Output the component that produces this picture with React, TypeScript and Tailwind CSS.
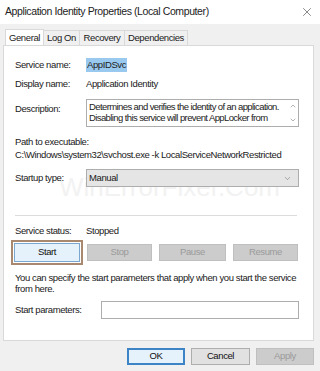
import { X, ChevronDown, ChevronUp } from 'lucide-react';

const font = { fontFamily: '"Liberation Sans", Arial, sans-serif' };

function Btn({ label, disabled, focus, blue }: { label: string; disabled?: boolean; focus?: boolean; blue?: boolean }) {
    if (disabled) {
        return (
            <div className="h-full flex items-center justify-center bg-[#cccccc] border border-[#bfbfbf] text-[#9a9a9a]">
                {label}
            </div>
        );
    }
    if (focus) {
        return (
            <div className="h-full border-2 border-[#a8896f] p-px">
                <div className="h-full flex items-center justify-center bg-[#e5f1fb] border border-[#7aa7cf] text-[#111]">{label}</div>
            </div>
        );
    }
    if (blue) {
        return (
            <div className="h-full flex items-center justify-center bg-[#e5f1fb] border-2 border-[#3d84c6] text-[#111]">
                {label}
            </div>
        );
    }
    return (
        <div className="h-full flex items-center justify-center bg-[#e1e1e1] border border-[#adadad] text-[#111]">{label}</div>
    );
}

export default function App() {
    return (
        <div className="w-[320px] h-[371px] bg-[#f0f0f0] text-[9.5px] tracking-[-0.4px] text-[#1a1a1a] overflow-hidden" style={font}>
            {/* title bar */}
            <div className="h-[24px] bg-white flex items-center justify-between pl-[5px] pr-[6px]">
                <span className="text-[10.5px] text-[#222]">Application Identity Properties (Local Computer)</span>
                <X size={14} strokeWidth={1} className="text-[#333]" />
            </div>

            {/* tabs */}
            <div className="h-[21px] flex items-end pl-[5px]">
                <div className="h-[17px] w-[39px] bg-white border border-b-0 border-[#d9d9d9] flex items-center justify-center relative top-px">
                    General
                </div>
                <div className="h-[15px] w-[36px] border border-l-0 border-b-0 border-[#d9d9d9] flex items-center justify-center">Log On</div>
                <div className="h-[15px] w-[45px] border border-l-0 border-b-0 border-[#d9d9d9] flex items-center justify-center">Recovery</div>
                <div className="h-[15px] w-[63px] border border-l-0 border-b-0 border-[#d9d9d9] flex items-center justify-center">Dependencies</div>
            </div>

            {/* panel */}
            <div className="ml-[3px] w-[311px] h-[296px] bg-white border border-[#d9d9d9] pl-[11px] pr-[14px] relative">
                {/* faint watermark over the form */}
                <div className="absolute left-[55px] top-[128px] text-[26px] text-[#f2f2f2] tracking-normal leading-none pointer-events-none">
                    WinErrorFixer.Com
                </div>
                <div className="flex items-center h-[12px] mt-[13px]">
                    <span className="w-[71px]">Service name:</span>
                    <span className="bg-[#99c9ef] px-px text-[#222]">AppIDSvc</span>
                </div>
                <div className="flex items-center h-[12px] mt-[7px]">
                    <span className="w-[71px]">Display name:</span>
                    <span>Application Identity</span>
                </div>
                <div className="flex mt-[9px]">
                    <span className="w-[71px] pt-[3px]">Description:</span>
                    <div className="w-[213px] h-[28px] border border-[#adadad] flex">
                        <div className="flex-1 min-w-0 pl-[2px] leading-[11px] pt-px text-[#222] overflow-hidden whitespace-nowrap tracking-[-0.6px]">
                            <div>Determines and verifies the identity of an application.</div>
                            <div>Disabling this service will prevent AppLocker from</div>
                        </div>
                        <div className="w-[10px] flex flex-col justify-between items-center py-[2px] text-[#666]">
                            <ChevronUp size={8} strokeWidth={1.5} />
                            <ChevronDown size={8} strokeWidth={1.5} />
                        </div>
                    </div>
                </div>
                <div className="mt-[9px] h-[12px] flex items-center">Path to executable:</div>
                <div className="mt-px h-[12px] flex items-center whitespace-nowrap">C:\Windows\system32\svchost.exe -k LocalServiceNetworkRestricted</div>
                <div className="flex items-center mt-[8px] relative">
                    <span className="w-[71px]">Startup type:</span>
                    <div className="w-[213px] h-[18px] bg-[#e5e5e5] border border-[#adadad] flex items-center justify-between pl-[2px] pr-[6px]">
                        <span>Manual</span>
                        <ChevronDown size={9} strokeWidth={1.2} className="text-[#555]" />
                    </div>
                </div>
                <div className="mt-[28px] h-px w-[282px] bg-[#dcdcdc]" />
                <div className="flex items-center h-[12px] mt-[9px]">
                    <span className="w-[71px]">Service status:</span>
                    <span>Stopped</span>
                </div>
                <div className="flex items-center h-[25px] mt-[3px] -ml-[4px]">
                    <div className="w-[72px] h-[25px]"><Btn label="Start" focus /></div>
                    <div className="w-[65px] h-[17px] ml-[4px]"><Btn label="Stop" disabled /></div>
                    <div className="w-[67px] h-[17px] ml-[7px]"><Btn label="Pause" disabled /></div>
                    <div className="w-[65px] h-[17px] ml-[7px]"><Btn label="Resume" disabled /></div>
                </div>
                <div className="mt-[7px] leading-[11px] w-[285px]">
                    You can specify the start parameters that apply when you start the service from here.
                </div>
                <div className="flex items-center mt-[7px]">
                    <span className="w-[86px]">Start parameters:</span>
                    <div className="w-[199px] h-[18px] border border-[#adadad] bg-white" />
                </div>
            </div>

            {/* bottom buttons */}
            <div className="flex h-[17px] mt-[7px] pl-[127px] gap-[6px]">
                <div className="w-[58px]"><Btn label="OK" blue /></div>
                <div className="w-[59px]"><Btn label="Cancel" /></div>
                <div className="w-[58px]"><Btn label="Apply" disabled /></div>
            </div>
        </div>
    );
}
